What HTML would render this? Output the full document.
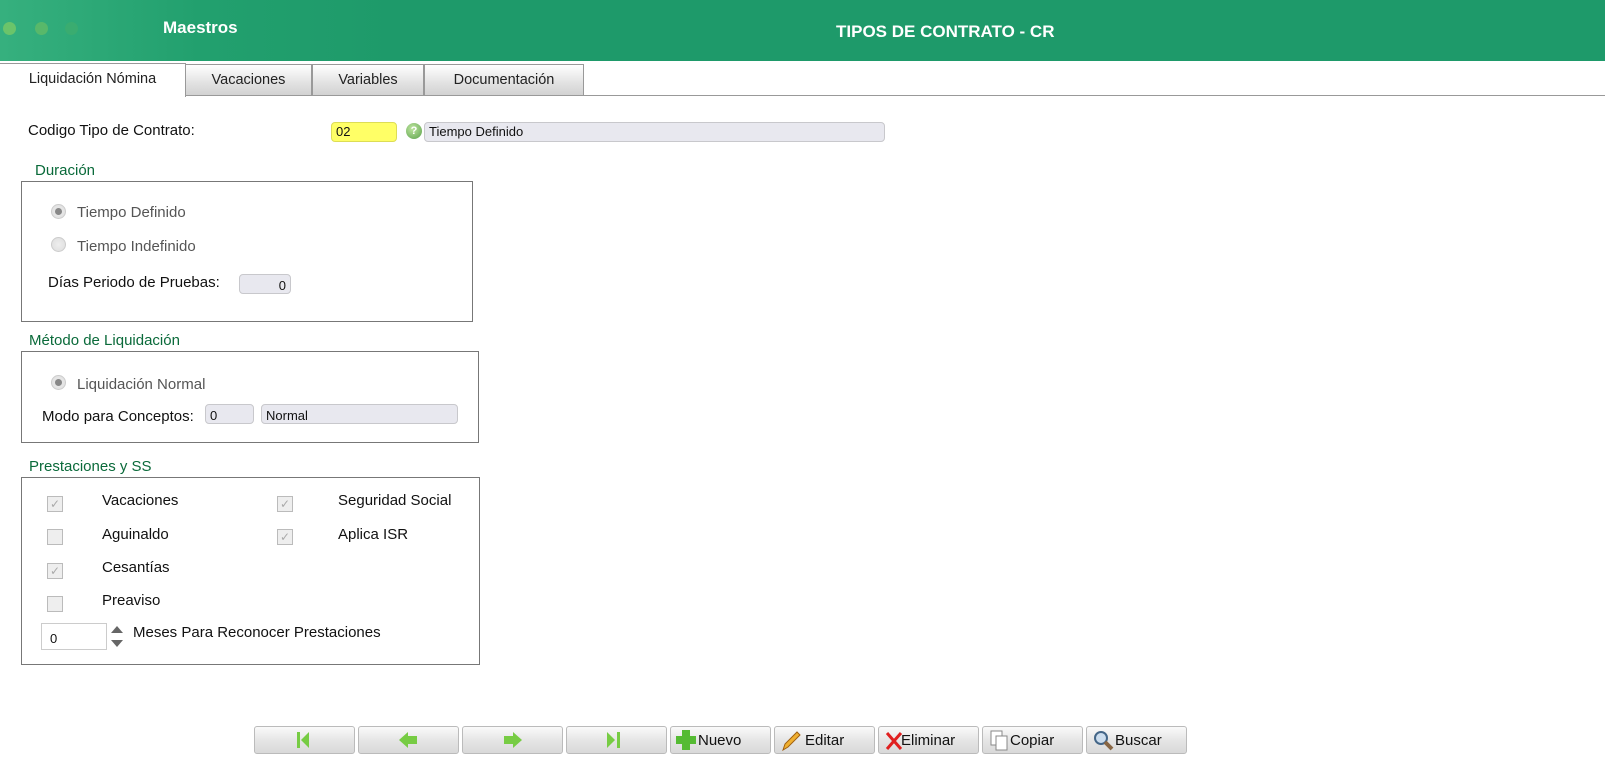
<!DOCTYPE html>
<html><head><meta charset="utf-8"><style>
*{box-sizing:border-box;margin:0;padding:0}
body{width:1605px;height:772px;background:#fff;font-family:"Liberation Sans",sans-serif;font-size:15px;color:#111;position:relative;overflow:hidden}
.a{position:absolute}
.hdr{left:0;top:0;width:1605px;height:61px;background:linear-gradient(90deg,#36b07e 0,#22a06e 200px,#1e9a6a 400px,#1e9a6a 100%)}
.dot{width:13px;height:13px;border-radius:50%;top:22px}
.tab{top:64px;height:32px;border:1px solid #999;background:linear-gradient(#fff,#e2e2e2 60%,#d2d2d2);text-align:center;line-height:30px;font-size:14.5px;color:#222}
.box{border:1px solid #777}
.leg{color:#0a6a3a;font-size:15px}
.inp{background:#e8e8ef;border:1px solid #c8c8cc;border-radius:4px;font-size:13px;padding-left:4px;line-height:18px;height:20px}
.rad{width:15px;height:15px;border-radius:50%;border:1px solid #ccc;background:radial-gradient(circle,#eee,#ddd)}
.rad.on::after{content:"";position:absolute;left:3px;top:3px;width:7px;height:7px;border-radius:50%;background:#888}
.gray{color:#555}
.cb{width:16px;height:16px;border:1px solid #bbb;background:#eee;color:#aaa;font-size:12px;text-align:center;line-height:14px}
.btn{top:726px;height:28px;width:101px;border:1px solid #bbb;border-radius:3px;background:linear-gradient(#fafafa,#e6e6e6 50%,#d9d9d9);font-size:15px;line-height:27px;color:#111}
</style></head><body>
<div class="a hdr"></div>
<div class="a dot" style="left:3px;background:#6bc46a"></div>
<div class="a dot" style="left:35px;background:#58b86a"></div>
<div class="a dot" style="left:65px;background:#3aac70"></div>
<div class="a" style="left:163px;top:18px;color:#fff;font-weight:bold;font-size:17px">Maestros</div>
<div class="a" style="left:836px;top:22px;color:#fff;font-weight:bold;font-size:17px">TIPOS DE CONTRATO - CR</div>
<div class="a" style="left:0;top:95px;width:1605px;height:1px;background:#999"></div>
<div class="a tab" style="left:0;width:186px;top:63px;height:34px;background:#fff;border-bottom:none;border-left:none">Liquidación Nómina</div>
<div class="a tab" style="left:185px;width:127px">Vacaciones</div>
<div class="a tab" style="left:312px;width:112px">Variables</div>
<div class="a tab" style="left:424px;width:160px">Documentación</div>

<div class="a" style="left:28px;top:122px">Codigo Tipo de Contrato:</div>
<div class="a inp" style="left:331px;top:122px;width:66px;background:#ffff66;border-color:#dddd55">02</div>
<div class="a" style="left:406px;top:123px;width:16px;height:16px;border-radius:50%;background:radial-gradient(circle at 40% 35%,#bfe6a0,#5aa04a);color:#fff;font-size:11px;font-weight:bold;text-align:center;line-height:16px">?</div>
<div class="a inp" style="left:424px;top:122px;width:461px">Tiempo Definido</div>

<div class="a leg" style="left:35px;top:162px">Duración</div>
<div class="a box" style="left:21px;top:181px;width:452px;height:141px"></div>
<div class="a rad on" style="left:51px;top:204px"></div>
<div class="a gray" style="left:77px;top:204px">Tiempo Definido</div>
<div class="a rad" style="left:51px;top:237px"></div>
<div class="a gray" style="left:77px;top:238px">Tiempo Indefinido</div>
<div class="a" style="left:48px;top:274px">Días Periodo de Pruebas:</div>
<div class="a inp" style="left:239px;top:274px;width:52px;text-align:right;padding-right:4px;line-height:22px">0</div>

<div class="a leg" style="left:29px;top:332px">Método de Liquidación</div>
<div class="a box" style="left:21px;top:351px;width:458px;height:92px"></div>
<div class="a rad on" style="left:51px;top:375px"></div>
<div class="a gray" style="left:77px;top:376px">Liquidación Normal</div>
<div class="a" style="left:42px;top:408px">Modo para Conceptos:</div>
<div class="a inp" style="left:205px;top:404px;width:49px;line-height:22px">0</div>
<div class="a inp" style="left:261px;top:404px;width:197px;line-height:22px">Normal</div>

<div class="a leg" style="left:29px;top:458px">Prestaciones y SS</div>
<div class="a box" style="left:21px;top:477px;width:459px;height:188px"></div>
<div class="a cb" style="left:47px;top:496px">✓</div><div class="a" style="left:102px;top:492px">Vacaciones</div>
<div class="a cb" style="left:47px;top:529px"></div><div class="a" style="left:102px;top:526px">Aguinaldo</div>
<div class="a cb" style="left:47px;top:563px">✓</div><div class="a" style="left:102px;top:559px">Cesantías</div>
<div class="a cb" style="left:47px;top:596px"></div><div class="a" style="left:102px;top:592px">Preaviso</div>
<div class="a cb" style="left:277px;top:496px">✓</div><div class="a" style="left:338px;top:492px">Seguridad Social</div>
<div class="a cb" style="left:277px;top:529px">✓</div><div class="a" style="left:338px;top:526px">Aplica ISR</div>
<div class="a" style="left:41px;top:623px;width:66px;height:27px;border:1px solid #ccc;font-size:13px;padding:7px 0 0 8px">0</div>
<div class="a" style="left:111px;top:626px;width:0;height:0;border:6px solid transparent;border-bottom:7px solid #666;border-top:none"></div>
<div class="a" style="left:111px;top:640px;width:0;height:0;border:6px solid transparent;border-top:7px solid #666;border-bottom:none"></div>
<div class="a" style="left:133px;top:624px">Meses Para Reconocer Prestaciones</div>

<div class="a btn" style="left:254px"><svg width="99" height="26"><rect x="42" y="5" width="3" height="16" fill="#7c4"/><path d="M46 13 L54 5 V21Z" fill="#7c4"/></svg></div>
<div class="a btn" style="left:358px"><svg width="99" height="26"><path d="M40 13 L49 5 V9 H58 V17 H49 V21Z" fill="#7c4"/></svg></div>
<div class="a btn" style="left:462px"><svg width="99" height="26"><path d="M59 13 L50 5 V9 H41 V17 H50 V21Z" fill="#7c4"/></svg></div>
<div class="a btn" style="left:566px"><svg width="99" height="26"><path d="M40 5 L48 13 L40 21Z" fill="#7c4"/><rect x="50" y="5" width="3" height="16" fill="#7c4"/></svg></div>
<div class="a btn" style="left:670px"><span style="position:absolute;left:5px;top:3px;width:20px;height:20px"><span style="position:absolute;left:6px;top:0;width:8px;height:20px;background:#5b3"></span><span style="position:absolute;left:0;top:6px;width:20px;height:8px;background:#5b3"></span></span><span style="position:absolute;left:27px">Nuevo</span></div>
<div class="a btn" style="left:774px"><svg class="a" style="left:5px;top:3px" width="22" height="22"><path d="M3 20 L5 14 L17 2 L20 5 L8 17Z" fill="#f0b030" stroke="#a06010"/></svg><span style="position:absolute;left:30px">Editar</span></div>
<div class="a btn" style="left:878px"><svg class="a" style="left:6px;top:4px" width="18" height="20"><path d="M2 2 L16 18 M16 2 L2 18" stroke="#e02020" stroke-width="3"/></svg><span style="position:absolute;left:22px">Eliminar</span></div>
<div class="a btn" style="left:982px"><svg class="a" style="left:7px;top:3px" width="20" height="22"><rect x="1" y="1" width="11" height="14" fill="#fff" stroke="#888"/><rect x="6" y="6" width="11" height="14" fill="#fff" stroke="#888"/></svg><span style="position:absolute;left:27px">Copiar</span></div>
<div class="a btn" style="left:1086px"><svg class="a" style="left:6px;top:3px" width="22" height="22"><circle cx="8" cy="8" r="6" fill="#cde" stroke="#468" stroke-width="2"/><path d="M12 12 L19 19" stroke="#864" stroke-width="4"/></svg><span style="position:absolute;left:28px">Buscar</span></div>
</body></html>
